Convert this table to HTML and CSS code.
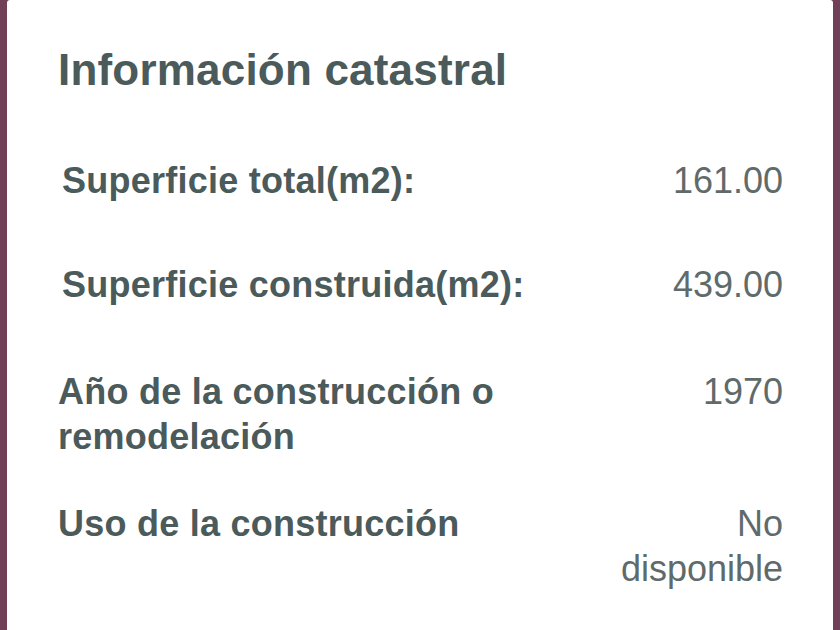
FILE: index.html
```html
<!DOCTYPE html>
<html lang="es">
<head>
<meta charset="utf-8">
<title>Información catastral</title>
<link rel="stylesheet" href="styles.css">
</head>
<body>
<div class="card">
  <h2 class="title">Información catastral</h2>
  <div class="group group-table">
    <div class="row">
      <div class="label">Superficie total(m2):</div>
      <div class="value">161.00</div>
    </div>
    <div class="row">
      <div class="label">Superficie construida(m2):</div>
      <div class="value">439.00</div>
    </div>
  </div>
  <div class="group group-list">
    <div class="row">
      <div class="label">Año de la construcción o remodelación</div>
      <div class="value">1970</div>
    </div>
    <div class="row">
      <div class="label">Uso de la construcción</div>
      <div class="value">No disponible</div>
    </div>
  </div>
</div>
</body>
</html>
```
FILE: styles.css
```css
html, body {
  margin: 0;
  padding: 0;
}
body {
  background: #6f4058;
  font-family: "Liberation Sans", Arial, sans-serif;
  height: 630px;
  overflow: hidden;
}
.card {
  margin: 0 7px;
  background: #ffffff;
  min-height: 630px;
  box-sizing: border-box;
  padding: 45px 50px 0 51px;
  border-radius: 3px 3px 0 0;
}
.title {
  margin: 0;
  font-size: 44px;
  line-height: 50.6px;
  font-weight: bold;
  letter-spacing: 0.2px;
  color: #4b5a5a;
}
.group {
  display: flex;
  flex-direction: column;
}
.group-table {
  margin-top: 62px;
  gap: 59px;
}
.group-table .label {
  padding-left: 4px;
}
.group-list {
  margin-top: 62px;
  gap: 42px;
}
.row {
  display: grid;
  grid-template-columns: 1fr 175px;
  column-gap: 20px;
  font-size: 36px;
  line-height: 45px;
}
.label {
  font-weight: bold;
  letter-spacing: 0.25px;
  color: #4b5a5a;
}
.value {
  text-align: right;
  color: #5f6b6b;
}
```
